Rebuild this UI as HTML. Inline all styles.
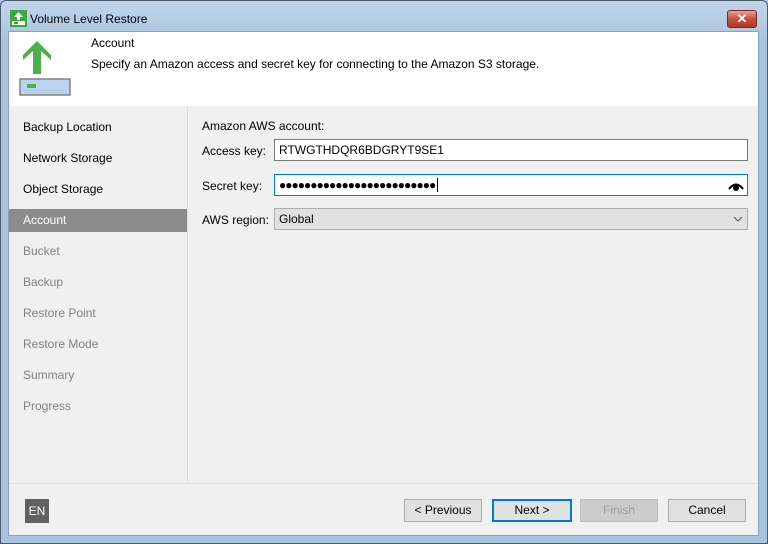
<!DOCTYPE html>
<html><head><style>
*{margin:0;padding:0;box-sizing:border-box}
body{width:768px;height:544px;position:relative;font-family:"Liberation Sans",sans-serif;font-size:12px;color:#000;background:#aac6e0;overflow:hidden}
.frame{position:absolute;left:0;top:0;width:768px;height:544px;background:linear-gradient(#c2d6ea,#a9c3de 40px,#a9c3de);border:1px solid #4a5a6a;border-radius:6px 6px 0 0}
.abs{position:absolute}
.title{left:30px;top:12px;font-size:12px}
.close{left:727px;top:10px;width:30px;height:18px;border:1px solid #7a2a20;border-radius:3px;background:linear-gradient(#e8a094,#c8503c 50%,#b03a26);color:#fff;font-weight:bold;text-align:center;line-height:16px;font-size:13px}
.win{left:8px;top:31px;width:751px;height:505px;background:#f0f0f0;border:1px solid #8aa0b8}
.hdr{left:0;top:0;width:749px;height:74px;background:#fff}
.nav{left:0;top:74px;width:179px;height:377px;background:#f0f0f0;border-right:1px solid #ddd}
.nav div{height:31px;line-height:23px;padding-left:14px;color:#000}
.nav .dis{color:#808080}
.nav .sel{background:#8c8c8c;color:#fff;height:23px;margin-bottom:8px}
.input{background:#fff;border:1px solid #7a7a7a;height:22px;line-height:20px;padding-left:4px}
.btn{top:467px;height:23px;border:1px solid #adadad;background:#e1e1e1;text-align:center;line-height:21px}
</style></head><body>
<div class="frame"></div>
<svg class="abs" style="left:10px;top:10px" width="17" height="17"><rect x="0" y="0" width="17" height="17" fill="#3aa83a"/><path d="M8.5 2 L13 7 H10 V10 H7 V7 H4 Z" fill="#fff"/><rect x="2" y="11" width="13" height="4" fill="#fff"/><rect x="4" y="12" width="4" height="2" fill="#3aa83a"/></svg>
<div class="abs title">Volume Level Restore</div>
<div class="abs close">✕</div>
<div class="abs win">
 <div class="abs hdr">
  <svg class="abs" style="left:10px;top:8px" width="55" height="56"><path d="M18 1 L32 15 V20 L22 11 V34 H14 V11 L4 20 V15 Z" fill="#4cb04c"/><rect x="1" y="39" width="50" height="16" fill="#b8d4ee" stroke="#808080" stroke-width="1.5"/><rect x="8" y="44" width="9" height="4" fill="#4cb04c"/></svg>
  <div class="abs" style="left:82px;top:4px">Account</div>
  <div class="abs" style="left:82px;top:25px">Specify an Amazon access and secret key for connecting to the Amazon S3 storage.</div>
 </div>
 <div class="abs nav" style="padding-top:10px">
  <div>Backup Location</div><div>Network Storage</div><div>Object Storage</div>
  <div class="sel">Account</div>
  <div class="dis">Bucket</div><div class="dis">Backup</div><div class="dis">Restore Point</div><div class="dis">Restore Mode</div><div class="dis">Summary</div><div class="dis">Progress</div>
 </div>
 <div class="abs" style="left:193px;top:87px">Amazon AWS account:</div>
 <div class="abs" style="left:193px;top:112px">Access key:</div>
 <div class="abs input" style="left:265px;top:107px;width:474px">RTWGTHDQR6BDGRYT9SE1</div>
 <div class="abs" style="left:193px;top:147px">Secret key:</div>
 <div class="abs input" style="left:265px;top:142px;width:474px;border-color:#0078d7;letter-spacing:-1px;font-size:12px">●●●●●●●●●●●●●●●●●●●●●●●●●<span style="border-left:1px solid #000;margin-left:2px"></span></div>
 <svg class="abs" style="left:719px;top:148px" width="16" height="12"><path d="M1 9 Q8 0 15 9" fill="none" stroke="#000" stroke-width="2"/><circle cx="8" cy="8" r="3" fill="#000"/></svg>
 <div class="abs" style="left:193px;top:181px">AWS region:</div>
 <div class="abs input" style="left:265px;top:176px;width:474px;background:#e1e1e1;border-color:#adadad">Global</div>
 <svg class="abs" style="left:724px;top:183px" width="10" height="8"><path d="M1 2 L5 6 L9 2" fill="none" stroke="#555"/></svg>
 <div class="abs" style="left:0;top:451px;width:749px;height:1px;background:#ddd"></div>
 <div class="abs" style="left:16px;top:467px;width:24px;height:24px;background:#606060;color:#fff;text-align:center;line-height:24px;font-size:12px">EN</div>
 <div class="abs btn" style="left:395px;width:78px">&lt; Previous</div>
 <div class="abs btn" style="left:483px;width:80px;border:2px solid #0078d7;line-height:19px">Next &gt;</div>
 <div class="abs btn" style="left:571px;width:78px;color:#a0a0a0;background:#cccccc;border-color:#bfbfbf">Finish</div>
 <div class="abs btn" style="left:659px;width:78px">Cancel</div>
</div>
</body></html>
